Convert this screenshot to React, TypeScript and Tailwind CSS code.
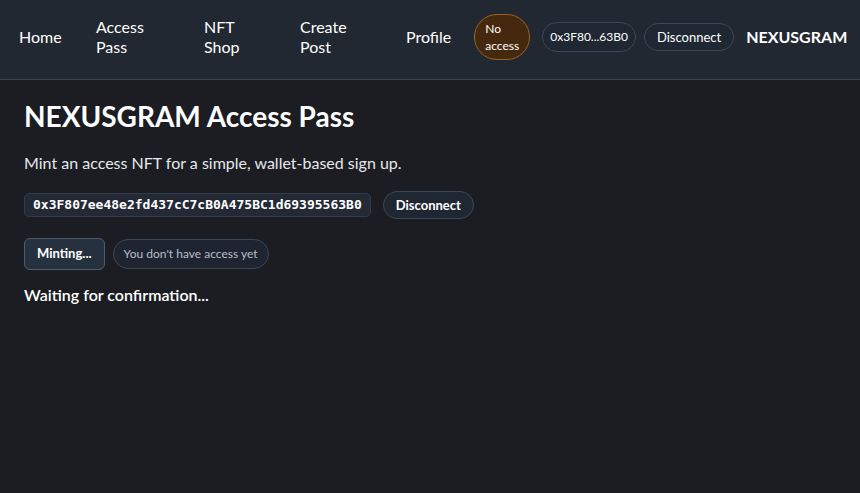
import React from 'react';

const navItems = [
  { label: 'Home', w: 'w-[77px]' },
  { label: 'Access Pass', w: 'w-[108px]' },
  { label: 'NFT Shop', w: 'w-[96px]' },
  { label: 'Create Post', w: 'w-[106px]' },
];

export default function App() {
  return (
    <div className="min-h-[493px] bg-[#1b1d22] text-white font-['Lato','Noto_Sans',sans-serif]">
      <header className="flex h-[80px] items-center border-b border-[#3a4350] bg-[#222831] pb-[5px] pl-[19px] pr-2">
        <nav className="flex items-center text-[16px] leading-[20px]">
          {navItems.map((item) => (
            <a key={item.label} className={`${item.w} shrink-0 text-white`}>
              <span className="block w-[50px]">{item.label}</span>
            </a>
          ))}
          <a className="text-white">Profile</a>
        </nav>
        <div className="ml-[23px] flex items-center">
          <span className="flex h-[46px] w-[56px] items-center rounded-full border border-[#9a6326] bg-[#45290f] pl-[10px] text-[12px] leading-[17px]">
            No access
          </span>
          <span className="ml-3 rounded-full border border-[#3b4757] bg-[#1f2733] px-[7px] py-[6px] text-[12px] leading-[16px]">
            0x3F80...63B0
          </span>
          <button className="ml-2 rounded-full border border-[#3b4757] bg-[#1f2733] px-[12px] py-[5px] text-[13px] leading-[16px] text-white">
            Disconnect
          </button>
          <span className="ml-3 text-[16px] font-bold">NEXUSGRAM</span>
        </div>
      </header>

      <main className="px-6 pt-[18px]">
        <h1 className="text-[28px] font-bold leading-[36px]">NEXUSGRAM Access Pass</h1>
        <p className="mt-[18px] text-[16px] leading-[22px] text-[#e6e8eb]">
          Mint an access NFT for a simple, wallet-based sign up.
        </p>
        <div className="mt-[17px] flex items-center gap-3">
          <code className="rounded-[5px] border border-[#323b48] bg-[#232a35] px-[8px] py-[3px] font-['DejaVu_Sans_Mono',monospace] text-[13px] font-bold leading-[16px]">
            0x3F807ee48e2fd437cC7cB0A475BC1d69395563B0
          </code>
          <button className="rounded-full border border-[#3b4757] bg-[#1f2733] px-[12px] py-[5px] text-[13px] font-bold leading-[16px] text-white">
            Disconnect
          </button>
        </div>
        <div className="mt-[19px] flex items-center gap-2">
          <button className="h-[32px] rounded-[6px] border border-[#4c5d72] bg-[#263140] px-3 text-[13px] font-bold text-white">
            Minting...
          </button>
          <span className="flex h-[30px] items-center rounded-full border border-[#3b4757] bg-[#1f2530] px-[10px] text-[12px] text-[#b7bec8]">
            You don't have access yet
          </span>
        </div>
        <p className="mt-[14px] text-[16px] font-semibold leading-[22px]">Waiting for confirmation...</p>
      </main>
    </div>
  );
}
